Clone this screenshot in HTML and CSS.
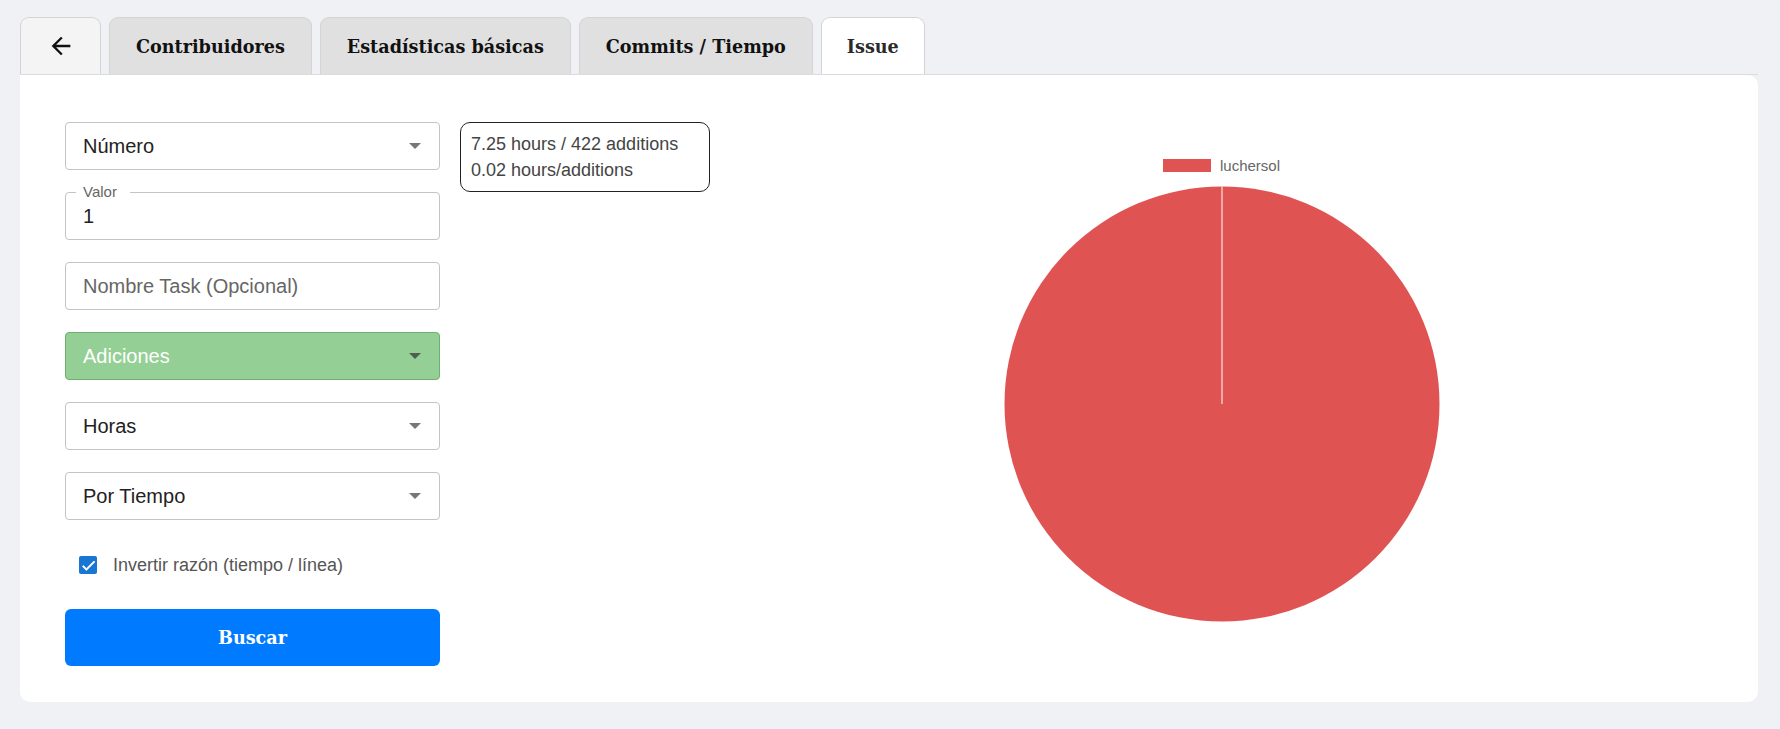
FILE: index.html
```html
<!DOCTYPE html>
<html lang="es">
<head>
<meta charset="utf-8">
<title>Issue</title>
<link rel="stylesheet" href="styles.css">
</head>
<body>
<div class="page">
  <nav class="tabs">
    <div class="tab tab-back">
      <svg width="28" height="28" viewBox="0 0 24 24"><path d="M20 11H7.83l5.59-5.59L12 4l-8 8 8 8 1.41-1.41L7.83 13H20v-2z" fill="#111"/></svg>
    </div>
    <div class="tab">Contribuidores</div>
    <div class="tab">Estadísticas básicas</div>
    <div class="tab">Commits / Tiempo</div>
    <div class="tab tab-active">Issue</div>
  </nav>
  <main class="card">
    <section class="form">
      <div class="field select"><span class="value">Número</span><span class="caret"></span></div>
      <div class="field outlined"><span class="legend">Valor</span><span class="value">1</span></div>
      <div class="field"><span class="placeholder">Nombre Task (Opcional)</span></div>
      <div class="field select green"><span class="value">Adiciones</span><span class="caret"></span></div>
      <div class="field select"><span class="value">Horas</span><span class="caret"></span></div>
      <div class="field select"><span class="value">Por Tiempo</span><span class="caret"></span></div>
      <label class="check">
        <span class="box"><svg width="17" height="17" viewBox="0 0 24 24"><path d="M9 16.17 4.83 12l-1.42 1.41L9 19 21 7l-1.41-1.41z" fill="#fff" stroke="#fff" stroke-width="1"/></svg></span>
        <span class="check-label">Invertir razón (tiempo / línea)</span>
      </label>
      <button class="btn">Buscar</button>
    </section>
    <section class="info">
      <div>7.25 hours / 422 additions</div>
      <div>0.02 hours/additions</div>
    </section>
    <section class="chart">
      <div class="legend-row"><span class="legend-box"></span><span class="legend-text">luchersol</span></div>
      <svg class="pie" width="436" height="436" viewBox="0 0 436 436">
        <circle cx="218" cy="218" r="217.5" fill="#e05353"/>
        <line x1="218" y1="0.5" x2="218" y2="218" stroke="#fff" stroke-width="1"/>
      </svg>
    </section>
  </main>
</div>
</body>
</html>
```
FILE: styles.css
```css
* { box-sizing: border-box; }
html, body { margin: 0; padding: 0; }
body {
  background: #f0f1f5;
  font-family: "Liberation Sans", Arial, sans-serif;
}
.page {
  padding: 17px 22px 0 20px;
}
.tabs {
  display: flex;
  gap: 8px;
  border-bottom: 1px solid #dcdcdc;
}
.tab {
  height: 57px;
  padding: 0 26px;
  display: flex;
  align-items: center;
  justify-content: center;
  background: #e0e0e0;
  border: 1px solid #d4d4d4;
  border-bottom: none;
  border-radius: 9px 9px 0 0;
  font-family: "DejaVu Serif", serif;
  font-weight: bold;
  font-size: 17.6px;
  color: #111;
}
.tab-back {
  width: 81px;
  padding: 0;
  background: #f4f4f4;
}
.tab-active {
  background: #fff;
  color: #2a2a2a;
  padding: 0 25px;
}
.card {
  background: #fff;
  border-radius: 0 10px 10px 10px;
  padding: 47px 45px 36px 45px;
  display: flex;
  align-items: flex-start;
  gap: 20px;
}
.form {
  width: 375px;
  flex: none;
  display: flex;
  flex-direction: column;
}
.field {
  position: relative;
  height: 48px;
  border: 1px solid #c4c4c4;
  border-radius: 4px;
  padding: 0 18px 0 17px;
  display: flex;
  align-items: center;
  justify-content: space-between;
  font-size: 20px;
  color: #222;
  margin-bottom: 22px;
}
.field:nth-child(6) { margin-bottom: 0; }
.placeholder { color: #666; }
.caret {
  width: 0;
  height: 0;
  border-left: 6px solid transparent;
  border-right: 6px solid transparent;
  border-top: 6px solid #777;
}
.green {
  background: #94cf95;
  border-color: #6fae70;
  color: #fff;
}
.green .caret { border-top-color: #4f5f4f; }
.legend {
  position: absolute;
  top: -10px;
  left: 10px;
  padding: 0 13px 0 7px;
  background: #fff;
  font-size: 15px;
  line-height: 17px;
  color: #666;
}
.check {
  display: flex;
  align-items: center;
  margin-top: 36px;
  padding-left: 14px;
  height: 18px;
}
.box {
  width: 18px;
  height: 18px;
  border-radius: 2px;
  background: #1976d2;
  display: flex;
  align-items: center;
  justify-content: center;
}
.check-label {
  margin-left: 16px;
  font-size: 18px;
  color: #555;
}
.btn {
  margin-top: 35px;
  height: 57px;
  border: none;
  border-radius: 6px;
  background: #007bff;
  color: #fff;
  font-family: "DejaVu Serif", serif;
  font-weight: bold;
  font-size: 17.6px;
}
.info {
  width: 250px;
  flex: none;
  border: 1px solid #222;
  border-radius: 10px;
  padding: 8px 10px 8px 10px;
  font-size: 18px;
  line-height: 26px;
  color: #444;
}
.chart {
  flex: 1;
  display: flex;
  flex-direction: column;
  align-items: center;
}
.legend-row {
  margin-top: 36px;
  height: 14px;
  display: flex;
  align-items: center;
  gap: 9px;
}
.legend-box {
  width: 48px;
  height: 13px;
  background: #e05353;
}
.legend-text {
  font-size: 15px;
  color: #666;
}
.pie {
  margin-top: 14px;
  display: block;
}
```
